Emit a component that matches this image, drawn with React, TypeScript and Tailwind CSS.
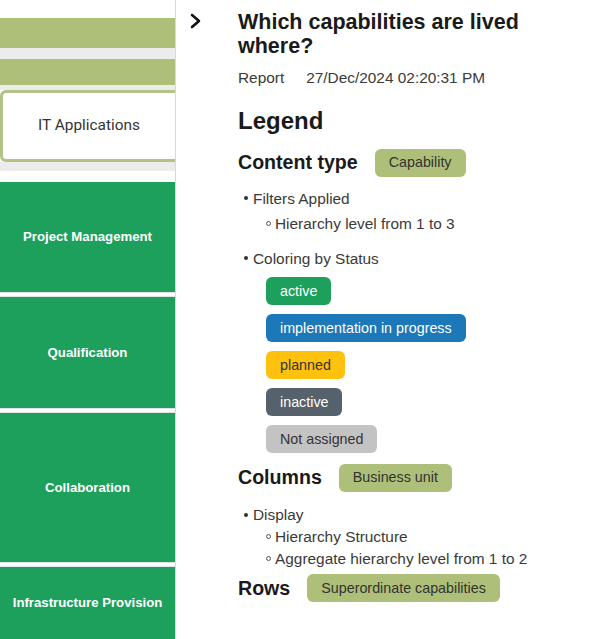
import { ReactNode } from "react";

const font = { fontFamily: '"Liberation Sans", Arial, sans-serif' };

const lanes = [
    { name: "Project Management", h: "h-[110px]" },
    { name: "Qualification", h: "h-[111px]" },
    { name: "Collaboration", h: "h-[149px]" },
    { name: "Infrastructure Provision", h: "h-[72px]" },
];

const statuses = [
    { label: "active", cls: "bg-[#1ca05b] text-white" },
    { label: "implementation in progress", cls: "bg-[#1d78ba] text-white" },
    { label: "planned", cls: "bg-[#fec10e] text-[#333]" },
    { label: "inactive", cls: "bg-[#56626b] text-white" },
    { label: "Not assigned", cls: "bg-[#c3c3c3] text-[#333]" },
];

function Pill({ children }: { children: ReactNode }) {
    return <span className="inline-flex items-center h-[28px] px-[14px] rounded-[6px] bg-[#adbf78] text-[14.3px] text-[#333]">{children}</span>;
}

function Bullet({ sub, children }: { sub?: boolean; children: ReactNode }) {
    return (
        <div className={`flex items-center h-[22px] text-[15.4px] text-[#3a3a3a] ${sub ? "pl-[28px]" : "pl-[6px]"}`}>
            {sub
                ? <span className="w-[5px] h-[5px] rounded-full border border-[#555] mr-[4px]" />
                : <span className="w-[4px] h-[4px] rounded-full bg-[#333] mr-[5px]" />}
            <span>{children}</span>
        </div>
    );
}

export default function App() {
    return (
        <div className="flex w-[608px] h-[639px] overflow-hidden bg-white" style={font}>
            <div className="w-[176px] h-[639px] shrink-0 border-r border-[#d5dadf] flex flex-col overflow-hidden">
                <div className="h-[18px] shrink-0 bg-white" />
                <div className="h-[30px] shrink-0 bg-[#adbf78]" />
                <div className="h-[11px] shrink-0 bg-[#ececec]" />
                <div className="h-[26px] shrink-0 bg-[#adbf78]" />
                <div className="h-[5px] shrink-0 bg-[#ececec]" />
                <div className="h-[72px] shrink-0 bg-white border-[3px] border-r-0 border-[#b3c383] rounded-l-[6px] flex items-center justify-center text-[15.4px] text-[#333]" style={{ fontFamily: "Roboto, sans-serif" }}>
                    IT Applications
                </div>
                <div className="h-[9px] shrink-0 bg-[#ececec]" />
                <div className="h-[11px] shrink-0 bg-white" />
                {lanes.map((l, i) => (
                    <div key={l.name} className="flex flex-col shrink-0">
                        {i > 0 && <div className="h-[5px] bg-white border-y border-[#dfe4e8]" />}
                        <div className={`${l.h} bg-[#1ca05b] flex items-center justify-center text-white font-bold text-[13.2px]`}>{l.name}</div>
                    </div>
                ))}
            </div>

            <div className="flex-1 flex pl-[14px]">
                <div className="w-[48px] pt-[13px]">
                    <svg width="12" height="16" viewBox="0 0 12 16" fill="none" stroke="#111" strokeWidth="2.6" strokeLinecap="round" strokeLinejoin="round">
                        <path d="M2 2l7 6-7 6" />
                    </svg>
                </div>
                <div className="flex-1 pt-[10px]">
                    <h1 className="max-w-[300px] text-[21.5px] leading-[24px] font-bold text-[#1a1a1a]">Which capabilities are lived where?</h1>
                    <div className="mt-[9px] flex h-[22px] items-center gap-[22px] text-[15.4px] text-[#3a3a3a]">
                        <span>Report</span>
                        <span>27/Dec/2024 02:20:31 PM</span>
                    </div>
                    <h2 className="mt-[17px] text-[24px] leading-[30px] font-bold text-[#1a1a1a]">Legend</h2>
                    <div className="mt-[12px] flex items-center gap-[17px]">
                        <span className="text-[19.6px] font-bold text-[#1a1a1a]">Content type</span>
                        <Pill>Capability</Pill>
                    </div>
                    <div className="mt-[10px] flex flex-col gap-[3px]">
                        <Bullet>Filters Applied</Bullet>
                        <Bullet sub>Hierarchy level from 1 to 3</Bullet>
                    </div>
                    <div className="mt-[13px]">
                        <Bullet>Coloring by Status</Bullet>
                    </div>
                    <div className="mt-[8px] pl-[28px] flex flex-col items-start gap-[9px]">
                        {statuses.map(s => (
                            <span key={s.label} className={`inline-flex items-center h-[28px] px-[14px] rounded-[6px] text-[14.3px] ${s.cls}`}>{s.label}</span>
                        ))}
                    </div>
                    <div className="mt-[10px] flex items-center gap-[17px]">
                        <span className="text-[19.6px] font-bold text-[#1a1a1a]">Columns</span>
                        <Pill>Business unit</Pill>
                    </div>
                    <div className="mt-[11px] flex flex-col">
                        <Bullet>Display</Bullet>
                        <Bullet sub>Hierarchy Structure</Bullet>
                        <Bullet sub>Aggregate hierarchy level from 1 to 2</Bullet>
                    </div>
                    <div className="mt-[4px] flex items-center gap-[17px]">
                        <span className="text-[19.6px] font-bold text-[#1a1a1a]">Rows</span>
                        <Pill>Superordinate capabilities</Pill>
                    </div>
                </div>
            </div>
        </div>
    );
}
